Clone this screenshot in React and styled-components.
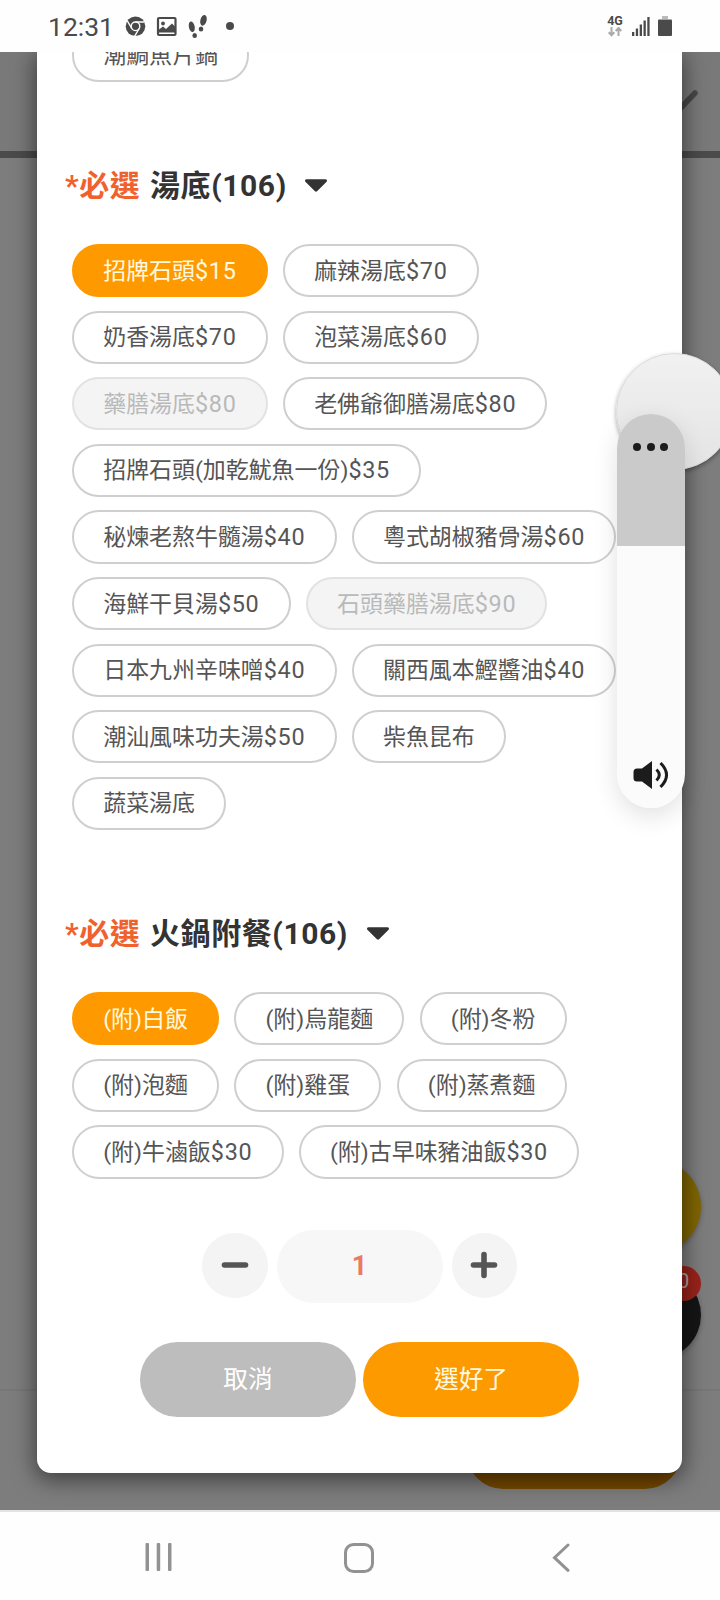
import React, { useState } from "react";
import styled, { createGlobalStyle } from "styled-components";
import { FaCaretDown } from "react-icons/fa";

const GlobalStyle = createGlobalStyle`
  * {
    box-sizing: border-box;
  }
  body {
    margin: 0;
    background: #fff;
    font-family: Roboto, "Noto Sans CJK TC", sans-serif;
  }
`;

const Screen = styled.div`
  position: relative;
  display: flex;
  flex-direction: column;
  width: 720px;
  height: 1600px;
  overflow: hidden;
`;

const StatusBar = styled.header`
  display: flex;
  align-items: center;
  height: 52px;
  padding: 0 47px 0 48px;
  background: #fefefe;
  color: #4a4a4a;
`;

const Clock = styled.span`
  width: 76px;
  font-size: 26.5px;
  line-height: 52px;
  padding-top: 1px;
`;

const Notifications = styled.div`
  display: flex;
  align-items: center;
  flex: 1;
`;

const Network = styled.div`
  display: flex;
  flex-direction: column;
  align-items: center;
  width: 18px;
  margin-right: 7px;
  font-size: 12.5px;
  font-weight: 700;
  line-height: 12px;
`;

const Page = styled.div`
  position: relative;
  display: flex;
  height: 1458px;
  padding: 0 38px 37px 37px;
  background: #7d7d7d;
  overflow: hidden;
`;

const PageHeader = styled.div`
  position: absolute;
  inset: 0 0 auto 0;
  height: 106px;
  background: #797979;
  border-bottom: 7px solid #4b4b4b;
`;

const PageFooter = styled.div`
  position: absolute;
  inset: auto 0 0 0;
  height: 121px;
  border-top: 2px solid #777;
`;

const CloseMark = styled.svg`
  position: absolute;
  top: 34px;
  left: 663px;
`;

const Floating = styled.div`
  position: absolute;
  top: ${props => props.$top}px;
  right: 19px;
  width: ${props => props.$size}px;
  height: ${props => props.$size}px;
  border-radius: 50%;
  background: ${props => props.$color};
  box-shadow: 0 2px 5px rgba(0, 0, 0, 0.25);
`;

const Badge = styled.span`
  position: absolute;
  top: 1214px;
  right: 19px;
  width: 35px;
  height: 35px;
  border-radius: 50%;
  background: #99231b;
  color: #b5a09e;
  font-size: 21px;
  line-height: 31px;
  text-align: center;
`;

const Checkout = styled.div`
  position: absolute;
  bottom: 21px;
  left: 466px;
  width: 216px;
  height: 75px;
  border-radius: 38px;
  background: #754800;
`;

const Dialog = styled.main`
  position: relative;
  display: flex;
  flex-direction: column;
  width: 645px;
  padding: 0 28px;
  background: #fff;
  border-radius: 0 0 14px 14px;
  box-shadow: 0 5px 22px 2px rgba(0, 0, 0, 0.5);
`;

const Heading = styled.h2`
  display: flex;
  align-items: center;
  gap: 9.5px;
  height: 40px;
  margin: ${props => props.$top}px 0 38px;
  color: #333;
  font-size: 30px;
  font-weight: 700;
  letter-spacing: 0.6px;
  line-height: 40px;
`;

const Required = styled.span`
  color: #f0622d;
`;

const Caret = styled(FaCaretDown)`
  width: 24px;
  height: 38px;
  margin: 0 0 4px 8px;
`;

const Options = styled.div`
  display: flex;
  flex-wrap: wrap;
  gap: 13.3px 15.3px;
  padding: 0 20px 0 7px;
  margin-top: ${props => props.$top || 0}px;
`;

const Option = styled.button`
  height: 53.3px;
  padding: 0 29.2px 4px;
  border: 2px solid ${props => (props.$selected ? "#ff9900" : "#cfcfcf")};
  border-radius: 27px;
  background: ${props => (props.$selected ? "#ff9900" : "#fff")};
  color: ${props => (props.$selected ? "#fff9e0" : "#555")};
  font-family: inherit;
  font-size: 22.95px;
  white-space: nowrap;
  &:disabled {
    border-color: #e2e2e2;
    background: #f4f4f4;
    color: #b9b9b9;
  }
`;

const Price = styled.span`
  font-size: 23.4px;
  letter-spacing: 0.7px;
`;

const Stepper = styled.div`
  display: flex;
  justify-content: center;
  align-items: center;
  gap: 9px;
  margin-top: 51px;
`;

const StepButton = styled.button`
  display: flex;
  align-items: center;
  justify-content: center;
  width: 65.5px;
  height: 65.5px;
  padding: 0 0 2px;
  margin-bottom: 1px;
  border: none;
  border-radius: 50%;
  background: #f4f4f4;
`;

const Quantity = styled.span`
  width: 166px;
  height: 73px;
  border-radius: 37px;
  background: #f7f7f7;
  color: #e87c62;
  font-size: 27px;
  font-weight: 700;
  line-height: 73px;
  text-align: center;
`;

const Actions = styled.div`
  display: flex;
  justify-content: center;
  gap: 7px;
  margin-top: 39px;
`;

const ActionButton = styled.button`
  width: 216px;
  height: 75px;
  padding: 0 0 5px;
  border: none;
  border-radius: 38px;
  background: ${props => (props.$primary ? "#fc9a00" : "#bdbdbd")};
  color: ${props => (props.$primary ? "#fff9e0" : "#fff")};
  font-family: inherit;
  font-size: 24.7px;
`;

const AssistBall = styled.div`
  position: absolute;
  top: 353px;
  left: 616px;
  width: 117px;
  height: 117px;
  border: 1px solid #dadada;
  border-radius: 50%;
  background: linear-gradient(#f1f1f1, #e4e4e4);
  box-shadow: 0 2px 4px rgba(0, 0, 0, 0.35);
`;

const VolumePanel = styled.div`
  position: absolute;
  top: 414px;
  left: 617px;
  display: flex;
  flex-direction: column;
  align-items: center;
  justify-content: space-between;
  width: 68px;
  height: 394px;
  padding: 29px 1px 18px 0;
  border-radius: 34px;
  background: linear-gradient(#cacaca 132px, #fbfbfb 132px);
  box-shadow: 0 8px 24px rgba(0, 0, 0, 0.12);
`;

const Dots = styled.div`
  display: flex;
  gap: 5.4px;
  & > i {
    width: 8px;
    height: 8px;
    border-radius: 50%;
    background: #1c1c1c;
  }
`;

const NavBar = styled.nav`
  display: flex;
  justify-content: space-between;
  height: 90px;
  padding: 31px 149px 0 144px;
  border-top: 2px solid #e2e2e2;
  background: #fefefe;
`;

const HomeIcon = styled.svg`
  margin-right: 8px;
`;

const soups = [
  { name: "招牌石頭", price: "$15" },
  { name: "麻辣湯底", price: "$70" },
  { name: "奶香湯底", price: "$70" },
  { name: "泡菜湯底", price: "$60" },
  { name: "藥膳湯底", price: "$80", soldOut: true },
  { name: "老佛爺御膳湯底", price: "$80" },
  { name: "招牌石頭(加乾魷魚一份)", price: "$35" },
  { name: "秘煉老熬牛髓湯", price: "$40" },
  { name: "粵式胡椒豬骨湯", price: "$60" },
  { name: "海鮮干貝湯", price: "$50" },
  { name: "石頭藥膳湯底", price: "$90", soldOut: true },
  { name: "日本九州辛味噌", price: "$40" },
  { name: "關西風本鰹醬油", price: "$40" },
  { name: "潮汕風味功夫湯", price: "$50" },
  { name: "柴魚昆布" },
  { name: "蔬菜湯底" }
];

const sides = [
  { name: "(附)白飯" },
  { name: "(附)烏龍麵" },
  { name: "(附)冬粉" },
  { name: "(附)泡麵" },
  { name: "(附)雞蛋" },
  { name: "(附)蒸煮麵" },
  { name: "(附)牛滷飯", price: "$30" },
  { name: "(附)古早味豬油飯", price: "$30" }
];

const OptionGroup = props => {
  const { title, options, top } = props;
  const [selected, setSelected] = useState(options[0].name);
  return (
    <section>
      <Heading $top={top}>
        <Required>*必選</Required>
        {title}
        <Caret />
      </Heading>
      <Options>
        {options.map(option => (
          <Option
            key={option.name}
            $selected={option.name === selected}
            disabled={option.soldOut}
            onClick={() => setSelected(option.name)}
          >
            {option.name}
            {option.price && <Price>{option.price}</Price>}
          </Option>
        ))}
      </Options>
    </section>
  );
};

const StatusIcons = () => (
  <svg width="112" height="28" viewBox="0 0 112 28">
    <circle cx="11.500" cy="14.300" r="9.800" fill="#4a4a4a" />
    <circle cx="11.500" cy="14.300" r="4.300" fill="none" stroke="#fefefe" strokeWidth="1.400" />
    <path d="M11.500 10h9M7.800 16.500L3.300 8.900M15.200 16.500L10.700 24.100" stroke="#fefefe" strokeWidth="1.400" />
    <rect x="34" y="6" width="17.500" height="17" rx="1" fill="none" stroke="#4a4a4a" strokeWidth="2.200" />
    <circle cx="39" cy="11.500" r="1.900" fill="#4a4a4a" />
    <path d="M35 20.500v-3l4-3 3 2.500 6-5.500 3 3v6z" fill="#4a4a4a" />
    <g fill="#4a4a4a">
      <ellipse cx="67.800" cy="14.800" rx="2.900" ry="5.400" transform="rotate(-12 67.800 14.800)" />
      <ellipse cx="70.700" cy="23.500" rx="2.300" ry="2.500" />
      <ellipse cx="79.500" cy="8.300" rx="3.100" ry="5.500" transform="rotate(14 79.500 8.300)" />
      <ellipse cx="77" cy="17" rx="2.300" ry="2.500" />
      <circle cx="106" cy="14" r="4" />
    </g>
  </svg>
);

const SignalIcons = () => (
  <svg width="42" height="24" viewBox="0 0 42 24">
    <g fill="#4a4a4a">
      <rect x="1" y="18" width="2.300" height="4" />
      <rect x="4.800" y="14.500" width="2.300" height="7.500" />
      <rect x="8.700" y="10.500" width="2.300" height="11.500" />
      <rect x="12.500" y="6.500" width="2.300" height="15.500" />
      <rect x="16.300" y="3" width="2.300" height="19" />
      <rect x="27" y="5.500" width="14" height="16.500" rx="1" />
    </g>
    <rect x="31" y="2" width="6" height="3" fill="#bbb" />
  </svg>
);

const App = () => {
  const [quantity, setQuantity] = useState(1);
  return (
    <Screen>
      <GlobalStyle />
      <StatusBar>
        <Clock>12:31</Clock>
        <Notifications>
          <StatusIcons />
        </Notifications>
        <Network>
          4G
          <svg width="14" height="10" viewBox="0 0 14 10" fill="none" stroke="#aaa" strokeWidth="2">
            <path d="M3.5 0v8M.7 5.3l2.8 3 2.8-3M10.5 9V1M7.7 4l2.8-3 2.8 3" />
          </svg>
        </Network>
        <SignalIcons />
      </StatusBar>
      <Page>
        <PageHeader />
        <CloseMark width="40" height="40" viewBox="0 0 40 40">
          <path d="M10 30L32 7" stroke="#484848" strokeWidth="5.5" strokeLinecap="round" />
        </CloseMark>
        <PageFooter />
        <Floating $top={1108} $size={93} $color="#7f6500" />
        <Floating $top={1219} $size={88} $color="#151515" />
        <Badge>0</Badge>
        <Checkout />
        <Dialog>
          <Options $top={-23.5}>
            <Option>潮鯛魚片鍋</Option>
          </Options>
          <OptionGroup title="湯底(106)" options={soups} top={84.2} />
          <OptionGroup title="火鍋附餐(106)" options={sides} top={84} />
          <Stepper>
            <StepButton onClick={() => setQuantity(Math.max(1, quantity - 1))}>
              <svg width="28" height="28" viewBox="0 0 28 28" stroke="#555" strokeWidth="5.6" strokeLinecap="round">
                <path d="M3.5 14h21" />
              </svg>
            </StepButton>
            <Quantity>{quantity}</Quantity>
            <StepButton onClick={() => setQuantity(quantity + 1)}>
              <svg width="28" height="28" viewBox="0 0 28 28" stroke="#555" strokeWidth="5.6" strokeLinecap="round">
                <path d="M3.5 14h21M14 3.5v21" />
              </svg>
            </StepButton>
          </Stepper>
          <Actions>
            <ActionButton>取消</ActionButton>
            <ActionButton $primary>選好了</ActionButton>
          </Actions>
        </Dialog>
      </Page>
      <NavBar>
        <svg width="29" height="28" viewBox="0 0 29 28" fill="#929292">
          <rect x="1.5" width="3.5" height="28" rx="1" />
          <rect x="12.7" width="3.5" height="28" rx="1" />
          <rect x="24" width="3.5" height="28" rx="1" />
        </svg>
        <HomeIcon width="30" height="30" viewBox="0 0 30 30" fill="none" stroke="#929292" strokeWidth="3">
          <rect x="1.5" y="1.5" width="27" height="27" rx="8" />
        </HomeIcon>
        <svg width="19" height="30" viewBox="0 0 19 30" fill="none" stroke="#929292" strokeWidth="3" strokeLinecap="round">
          <path d="M16 2L2.5 14.7l13.5 12.6" />
        </svg>
      </NavBar>
      <AssistBall />
      <VolumePanel>
        <Dots>
          <i />
          <i />
          <i />
        </Dots>
        <svg width="36" height="30" viewBox="0 0 36 30">
          <path d="M.5 12q0-3.500 3.500-3.500h5l10-7.500v28l-10-7.500h-5q-3.500 0-3.500-3.500z" fill="#1c1c1c" />
          <path d="M23.500 9.500q5.500 5.500 0 11M27.500 3q12 12 0 24" fill="none" stroke="#1c1c1c" strokeWidth="3" />
        </svg>
      </VolumePanel>
    </Screen>
  );
};

export default App;
